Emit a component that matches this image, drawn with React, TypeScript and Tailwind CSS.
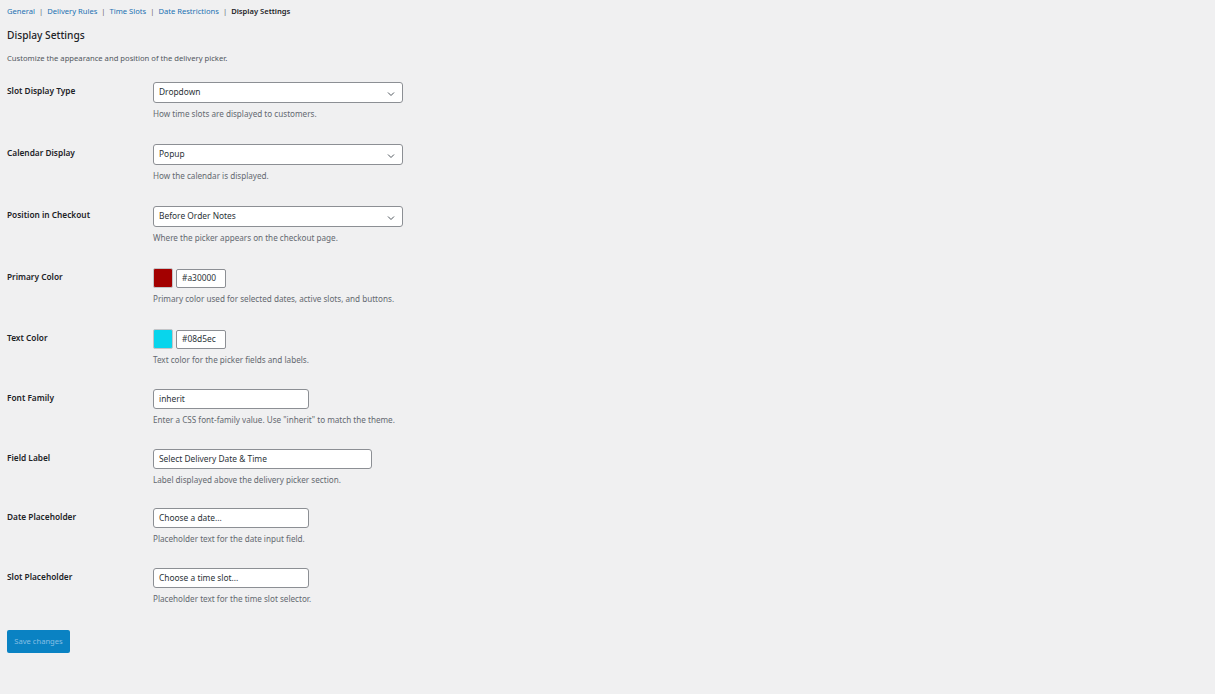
import React from "react";

const font = { fontFamily: '"Noto Sans", "Open Sans", sans-serif' };

function Chevron() {
  return (
    <svg width="8" height="6" viewBox="0 0 8 6" className="absolute right-[7px] top-[8px]">
      <path d="M1 1.5 L4 4.5 L7 1.5" fill="none" stroke="#50575e" strokeWidth="1" />
    </svg>
  );
}

function Row({ label, children, desc, pb }: { label: string; children: React.ReactNode; desc: string; pb: string }) {
  return (
    <div className={`flex ${pb}`}>
      <div className="w-[146px] shrink-0 pt-[2px] text-[8.3px] font-semibold leading-[14px] text-[#1d2327]">{label}</div>
      <div className="flex flex-col">
        {children}
        <div className="mt-[4px] text-[8.15px] leading-[13px] text-[#646970]">{desc}</div>
      </div>
    </div>
  );
}

function Select({ value }: { value: string }) {
  return (
    <div className="relative flex h-[21px] w-[250px] items-center rounded-[3px] border border-[#8c8f94] bg-white pl-[5px] text-[8.4px] text-[#2c3338]">
      {value}
      <Chevron />
    </div>
  );
}

function TextInput({ value, w }: { value: string; w: string }) {
  return (
    <div className={`flex h-[20px] ${w} items-center rounded-[3px] border border-[#8c8f94] bg-white pl-[5px] text-[8.4px] text-[#2c3338]`}>
      {value}
    </div>
  );
}

function ColorField({ color, value }: { color: string; value: string }) {
  return (
    <div className="flex items-center gap-[3px]">
      <div className="h-[20px] w-[20px] rounded-[2px] border border-[#c3c4c7]" style={{ backgroundColor: color }} />
      <div className="flex h-[19px] w-[50px] items-center rounded-[2px] border border-[#8c8f94] bg-white pl-[5px] text-[8.4px] text-[#2c3338]">
        {value}
      </div>
    </div>
  );
}

export default function App() {
  return (
    <div className="min-h-[694px] w-full bg-[#f0f0f1] px-[7px] pt-[4px]" style={font}>
      <div className="flex items-center text-[7.6px] leading-[14px]">
        <span className="text-[#2271b1]">General</span>
        <span className="mx-[4px] text-[#646970]">|</span>
        <span className="text-[#2271b1]">Delivery Rules</span>
        <span className="mx-[4px] text-[#646970]">|</span>
        <span className="text-[#2271b1]">Time Slots</span>
        <span className="mx-[4px] text-[#646970]">|</span>
        <span className="text-[#2271b1]">Date Restrictions</span>
        <span className="mx-[4px] text-[#646970]">|</span>
        <span className="font-semibold text-[#1d2327]">Display Settings</span>
      </div>
      <h2 className="mt-[10px] text-[10.2px] font-medium leading-[15px] text-[#1d2327]">Display Settings</h2>
      <p className="mt-[9px] text-[7.65px] leading-[12px] text-[#50575e]">Customize the appearance and position of the delivery picker.</p>

      <div className="mt-[18px] flex flex-col">
        <Row label="Slot Display Type" desc="How time slots are displayed to customers." pb="pb-[24px]">
          <Select value="Dropdown" />
        </Row>
        <Row label="Calendar Display" desc="How the calendar is displayed." pb="pb-[24px]">
          <Select value="Popup" />
        </Row>
        <Row label="Position in Checkout" desc="Where the picker appears on the checkout page." pb="pb-[24px]">
          <Select value="Before Order Notes" />
        </Row>
        <Row label="Primary Color" desc="Primary color used for selected dates, active slots, and buttons." pb="pb-[24px]">
          <ColorField color="#a30000" value="#a30000" />
        </Row>
        <Row label="Text Color" desc="Text color for the picker fields and labels." pb="pb-[23px]">
          <ColorField color="#08d5ec" value="#08d5ec" />
        </Row>
        <Row label="Font Family" desc={'Enter a CSS font-family value. Use "inherit" to match the theme.'} pb="pb-[23px]">
          <TextInput value="inherit" w="w-[156px]" />
        </Row>
        <Row label="Field Label" desc="Label displayed above the delivery picker section." pb="pb-[22px]">
          <TextInput value="Select Delivery Date & Time" w="w-[219px]" />
        </Row>
        <Row label="Date Placeholder" desc="Placeholder text for the date input field." pb="pb-[23px]">
          <TextInput value="Choose a date..." w="w-[156px]" />
        </Row>
        <Row label="Slot Placeholder" desc="Placeholder text for the time slot selector." pb="pb-[25px]">
          <TextInput value="Choose a time slot..." w="w-[156px]" />
        </Row>
      </div>
      <button className="flex h-[23px] w-[63px] items-center justify-center rounded-[2px] bg-[#0a82c3] text-[7.6px] text-[#86bfe3]">
        Save changes
      </button>
    </div>
  );
}
